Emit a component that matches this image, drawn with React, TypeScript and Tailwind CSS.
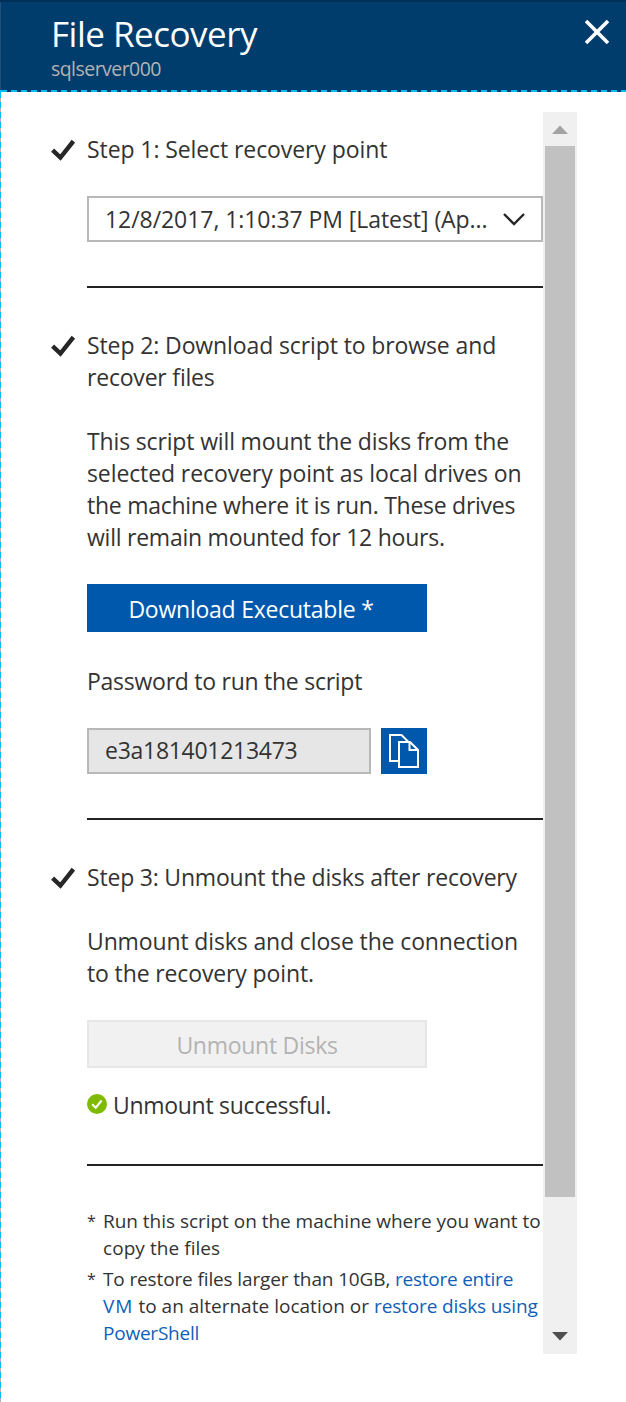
import type { ReactNode } from "react";

function Check() {
  return (
    <svg className="block h-6 w-6" viewBox="0 0 24 24" fill="none" stroke="#262626" strokeWidth="4.4">
      <path d="M1.6 11.2 L9.4 18.6 L22.4 2.2" />
    </svg>
  );
}

function Step({ title, children }: { title: ReactNode; children: ReactNode }) {
  return (
    <section className="flex">
      <div className="w-9 shrink-0 pt-1.5">
        <Check />
      </div>
      <div className="min-w-0 flex-1 border-b-2 border-[#222] pb-11">
        <h2 className="whitespace-nowrap">{title}</h2>
        {children}
      </div>
    </section>
  );
}

function Note({ children }: { children: ReactNode }) {
  return (
    <li className="flex">
      <span className="w-4 shrink-0 text-[16px]">*</span>
      <div className="whitespace-nowrap">{children}</div>
    </li>
  );
}

export default function App() {
  return (
    <div className="flex h-[1402px] w-[626px] flex-col overflow-hidden bg-white font-['Open_Sans','Noto_Sans',sans-serif] text-[23px] leading-8 tracking-[-0.15px] text-[#333]">
      <header className="flex h-[92px] shrink-0 flex-col border-t-2 border-[#003058] bg-[#003c6c]">
        <div className="flex min-h-0 flex-1 justify-between border-l border-[#1f4f7a] pr-[17px] pl-[50px]">
          <div>
            <h1 className="pt-2 text-[35px] leading-[48px] tracking-[-0.5px] text-white">File Recovery</h1>
            <p className="text-[19.5px] leading-[22px] tracking-[-0.55px] text-[#b3b3b3]">sqlserver000</p>
          </div>
          <svg className="mt-[18px] h-6 w-6" viewBox="0 0 24 24" stroke="#fff" strokeWidth="3.6">
            <path d="M1 1 L23 23 M23 1 L1 23" />
          </svg>
        </div>
        <div className="flex h-0.5">
          <div className="w-px bg-[#00bcf5]" />
          <div className="flex-1 bg-[repeating-linear-gradient(90deg,#00bcf5_0_6px,#003c6c_6px_10px)]" />
        </div>
      </header>

      <div className="flex flex-1">
        <div className="w-px bg-[repeating-linear-gradient(180deg,#00bcf5_0_6px,#b3b3b3_6px_10px)]" />
        <main className="w-[542px] pt-[41px] pl-[50px]">
          <Step title={<span className="tracking-[-0.09px]">Step 1: Select recovery point</span>}>
            <div className="mt-[31px] flex h-[46px] items-center justify-between border-2 border-[#b8b8b8] pr-[15px] pl-4">
              <span className="tracking-[-0.06px] whitespace-nowrap">12/8/2017, 1:10:37 PM [Latest] (Ap...</span>
              <svg className="h-6 w-6" viewBox="0 0 24 24" fill="none" stroke="#262626" strokeWidth="2.4">
                <path d="M2 7 L12 17 L22 7" />
              </svg>
            </div>
          </Step>

          <div className="h-[41px]" />
          <Step
            title={
              <>
                <span className="tracking-[-0.11px]">Step 2: Download script to browse and</span>
                <br />
                <span className="tracking-[-0.2px]">recover files</span>
              </>
            }
          >
            <p className="mt-8 whitespace-nowrap">
              This script will mount the disks from the
              <br />
              <span className="tracking-[-0.1px]">selected recovery point as local drives on</span>
              <br />
              <span className="tracking-[-0.26px]">the machine where it is run. These drives</span>
              <br />
              <span className="tracking-[-0.24px]">will remain mounted for 12 hours.</span>
            </p>
            <button className="mt-[31px] block h-12 w-[340px] bg-[#0058ad] pt-0.5 pr-3 tracking-[-0.24px] text-white">
              Download Executable *
            </button>
            <p className="mt-[33px] tracking-[-0.26px]">Password to run the script</p>
            <div className="mt-[31px] flex gap-2.5">
              <div className="flex h-[46px] w-[284px] items-center border-2 border-[#b8b8b8] bg-[#e6e6e6] pb-0.5 pl-4 tracking-[-0.28px]">
                e3a181401213473
              </div>
              <button className="h-[46px] w-[46px] bg-[#0058ad]" aria-label="Copy">
                <svg viewBox="0 0 46 46" fill="none" stroke="#fff" strokeWidth="2">
                  <path d="M17.5 33 H9 V7 H20.5 L27 13.5" />
                  <path d="M18 14 H29 L37 22 V39 H18 Z" />
                  <path d="M28.5 14 V22 H37" />
                </svg>
              </button>
            </div>
          </Step>

          <div className="h-[41px]" />
          <Step title={<span className="tracking-[-0.2px]">Step 3: Unmount the disks after recovery</span>}>
            <p className="mt-8 tracking-[-0.13px] whitespace-nowrap">
              Unmount disks and close the connection
              <br />
              to the recovery point.
            </p>
            <button className="mt-[31px] block h-12 w-[340px] border-2 border-[#e6e6e6] bg-[#f1f1f1] pt-0.5 tracking-[-0.28px] text-[#b3b3b3]">
              Unmount Disks
            </button>
            <div className="mt-[21px] -mb-px flex h-8 gap-1.5">
              <svg className="mt-[5px] h-5 w-5" viewBox="0 0 20 20" fill="none">
                <circle cx="10" cy="10" r="10" fill="#7fba00" />
                <path d="M5.2 10.3 L8.7 13.7 L14.6 6.5" stroke="#fff" strokeWidth="2" />
              </svg>
              <span className="tracking-[-0.3px]">Unmount successful.</span>
            </div>
          </Step>

          <ul className="flex flex-col gap-1 pt-[42px] pl-9 text-[19px] leading-[27px]">
            <Note>
              <span className="tracking-[-0.03px]">Run this script on the machine where you want to</span>
              <br />
              <span className="tracking-[0.06px]">copy the files</span>
            </Note>
            <Note>
              <span className="tracking-[-0.13px]">To restore files larger than 10GB, </span>
              <a className="tracking-[-0.24px] text-[#0f5fb8]">restore entire</a>
              <br />
              <a className="tracking-[1px] text-[#0f5fb8]">VM</a>
              <span className="tracking-[0.02px]"> to an alternate location or </span>
              <a className="tracking-[-0.12px] text-[#0f5fb8]">restore disks using</a>
              <br />
              <a className="tracking-[-0.22px] text-[#0f5fb8]">PowerShell</a>
            </Note>
          </ul>
        </main>

        <div className="mt-5 flex h-[1242px] w-[34px] flex-col items-center bg-[#f0f0f0]">
          <svg className="h-[34px] w-[34px] shrink-0" viewBox="0 0 34 34">
            <path d="M9 22 L17 13.5 L25 22 Z" fill="#a3a3a3" />
          </svg>
          <div className="h-[1051px] w-[30px] bg-[#c1c1c1]" />
          <div className="flex-1" />
          <svg className="h-[34px] w-[34px] shrink-0" viewBox="0 0 34 34">
            <path d="M9 12 L17 20.5 L25 12 Z" fill="#505050" />
          </svg>
        </div>
      </div>
    </div>
  );
}
